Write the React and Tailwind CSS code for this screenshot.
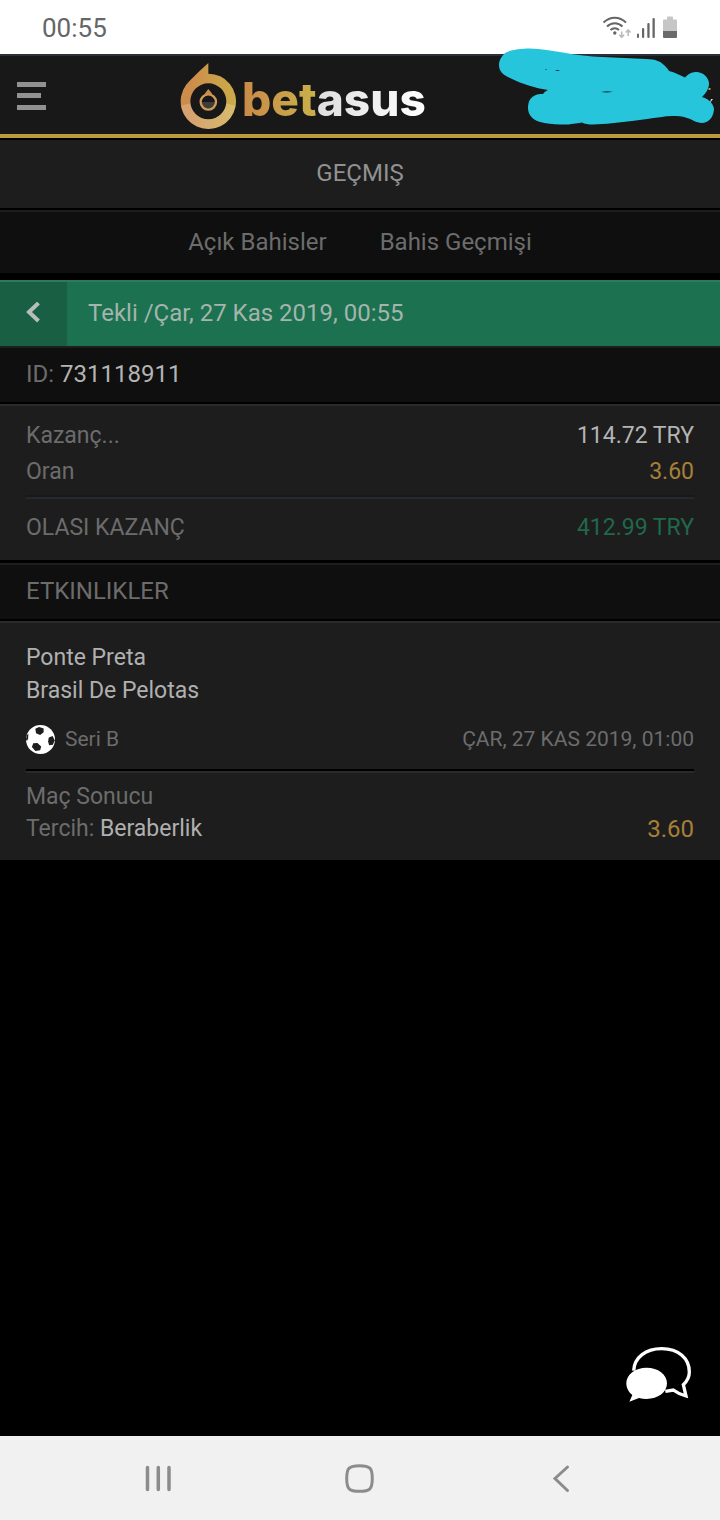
import React from "react";

const bet = {
  type: "Tekli",
  date: "Çar, 27 Kas 2019, 00:55",
  id: "731118911",
  stake: "114.72 TRY",
  odds: "3.60",
  payout: "412.99 TRY",
};

const events = [
  {
    home: "Ponte Preta",
    away: "Brasil De Pelotas",
    league: "Seri B",
    date: "ÇAR, 27 KAS 2019, 01:00",
    market: "Maç Sonucu",
    pick: "Beraberlik",
    odds: "3.60",
  },
];

const StatusBar = () => (
  <div className="flex h-[54px] items-center justify-between bg-white px-[42px] pt-0.5 text-[#666]">
    <span className="text-[26px] leading-8">00:55</span>
    <div className="flex items-center gap-1 pb-0.5">
      <svg width="30" height="24" viewBox="0 0 30 24" fill="none" stroke="#666" strokeWidth="2">
        <path d="M1.5 7.5C8 1 17.500 1 24 7.500" />
        <path d="M5 11.500C9.500 7 16 7 20.500 11.500" />
        <path d="M8.500 15C11 12.500 14.500 12.500 17 15" />
        <circle cx="12.800" cy="18" r="1.700" fill="#666" stroke="none" />
        <path d="M19.700 16.500V22M17.300 19.700L19.700 22.300L22.100 19.700" stroke="#bbb" strokeWidth="1.600" />
        <path d="M26.200 21V15M23.800 17.500L26.200 14.900L28.600 17.500" stroke="#bbb" strokeWidth="1.600" />
      </svg>
      <svg width="22" height="24" viewBox="0 0 22 24" fill="#666">
        <rect x="1" y="18.500" width="2" height="4.500" rx="1" />
        <rect x="6" y="13" width="2.200" height="10" rx="1" />
        <rect x="11.300" y="8" width="2.300" height="15" rx="1" />
        <rect x="16.500" y="3" width="2.300" height="20" rx="1" />
      </svg>
      <svg width="16" height="24" viewBox="0 0 16 24">
        <path d="M1 5.500a1 1 0 0 1 1-1h3V2.500a1 1 0 0 1 1-1h4a1 1 0 0 1 1 1v2h3a1 1 0 0 1 1 1V17H1z" fill="#c6c6c6" />
        <path d="M1 16h14v6a1 1 0 0 1-1 1H2a1 1 0 0 1-1-1z" fill="#6a6a6a" />
      </svg>
    </div>
  </div>
);

const Logo = () => (
  <a href="#" className="flex items-end gap-1.5">
    <svg width="56" height="66" viewBox="30 39 168 198" fill="none">
      <defs>
        <linearGradient id="ring" x1="0" y1="0" x2="1" y2="0">
          <stop offset="0.2" stopColor="#cc8d4c" />
          <stop offset="1" stopColor="#cbac48" />
        </linearGradient>
        <clipPath id="lower">
          <path d="M30 168L115 146L198 168V240H30z" />
        </clipPath>
      </defs>
      <path
        d="M115 39V71A83 83 0 1 1 48 105C64 86 94 58 115 39zM115 100A54 54 0 1 0 115 208A54 54 0 1 0 115 100z"
        fill="url(#ring)"
        fillRule="evenodd"
      />
      <circle cx="115" cy="154" r="68.500" stroke="#fff" strokeOpacity="0.2" strokeWidth="29" clipPath="url(#lower)" />
      <path d="M95 156H135A20 20 0 0 1 95 156z" fill="#3d3d3d" />
      <circle cx="115" cy="156" r="23" stroke="#cf9b58" strokeWidth="7" />
      <path d="M115 117L127 132L122 134H102z" fill="#cc8d4c" />
    </svg>
    <span className="font-['Inter'] text-[46px] font-extrabold leading-[60px]">
      <span className="bg-linear-to-r from-[#c98a48] to-[#c9b04a] bg-clip-text text-transparent">bet</span>
      <span className="bg-linear-to-r from-[#dedede] to-white bg-clip-text text-transparent">asus</span>
    </span>
  </a>
);

const Header = () => (
  <header className="relative flex h-[84px] items-center gap-[134px] border-t-2 border-b-4 border-t-[#2b2f3a] border-b-[#bd9a40] bg-[#181818] pt-0.5 pl-4">
    <button type="button" aria-label="Menü">
      <svg width="30" height="30" viewBox="0 0 30 30" fill="#919191">
        <path d="M1 1h29v5H1zM1 12h24v5H1zM1 24h29v5H1z" />
      </svg>
    </button>
    <Logo />
    {/* Marker strokes over the account area */}
    <svg className="absolute -top-2.5 right-0" width="224" height="100" viewBox="496 46 224 100" fill="#27c5dc">
      <path d="M499 65C499 60 502 56 505 53C510 50 520 48.500 530 48.500C541 48.500 552 51 563 52.500C576 55 590 56.500 603 57L646 59C656 59 661 62 664 65C666 67 668 69 669 71C675 72.500 680 75 685 77.500C689 73 693 72 697 72C704 73 708 77 709 83C709 89 706 93 702 97C710 99 714 105 714 110C713 118 708 123 702 123C696 123 692 119 687 118C682 116 677 116 673 116C664 116 656 118 647 119C630 121 612 124 593 124.500C588 124.500 585 124 582 122.500C576 123.500 568 125 560 124.500C553 124.500 546 123.500 540 122C532 120 528 114 528 108C528 102 530 98 534 96C537 94 540 94 543 94C544 92 546 91 548 90C535 88 522 84 510 78C503 75 499 71 499 65z" />
      <path d="M545 69h2v.6h-2zM555 70.400q2.500-1 5 0q-2.500 1-5 0zM601 92q5-1.200 12-.3q-6 1.400-12 .3z" fill="#0b343a" />
      <path d="M708.500 88h2v2h-2z" fill="#bd9a40" />
      <path d="M710 103l1-4h2z" fill="#ddd" />
      <path d="M626.500 140h1.500v2h-1.500z" fill="#999" />
    </svg>
  </header>
);

const BallIcon = () => (
  <svg width="29" height="29" viewBox="0 0 84 84">
    <circle cx="42" cy="42" r="42" fill="#fff" />
    <g fill="#1d1d1d">
      <path d="M27 11L38 6L51 10L51 21L41 29L29 24z" />
      <path d="M66 36L77 32L83 44L78 57L67 59L64 48z" />
      <path d="M21 53L33 52L44 62L41 73L27 75L17 64z" />
      <path d="M2 30L7 25L6 39L3 46L0 42z" />
    </g>
  </svg>
);

const SectionTitle = ({ children }) => (
  <div className="border-y-2 border-t-[#1e1e1e] border-b-black bg-[#0f0f0f] px-[26px] pt-[9px] pb-[11px] text-2xl leading-[34px]">
    {children}
  </div>
);

const Event = ({ event }) => (
  <div className="border-t-2 border-[#2a2a2a] bg-[#1d1d1d] px-[26px] pt-[18px] pb-[15px]">
    <div className="text-[23px] leading-[33px] text-[#b0b0b0]">
      <p>{event.home}</p>
      <p>{event.away}</p>
    </div>
    <div className="mt-4 flex items-center gap-2.5 border-b-2 border-black pb-3.5 text-[21px] leading-8">
      <BallIcon />
      <span>{event.league}</span>
      <span className="ml-auto">{event.date}</span>
    </div>
    <div className="flex items-end justify-between border-t-2 border-[#2a2a2a] pt-2 text-[23px] leading-8">
      <div>
        <p>{event.market}</p>
        <p>
          Tercih: <span className="text-[#b0b0b0]">{event.pick}</span>
        </p>
      </div>
      <span className="text-2xl leading-8 text-[#a87f38]">{event.odds}</span>
    </div>
  </div>
);

const NavBar = () => (
  <nav className="flex h-[84px] items-center justify-center gap-[168px] bg-[#f1f1f1]">
    <button type="button" aria-label="Son uygulamalar">
      <svg width="34" height="34" viewBox="0 0 34 34" stroke="#8c8c8c" strokeWidth="3.500" strokeLinecap="round">
        <path d="M6.500 6.500V28.500M17.300 6.500V28.500M28 6.500V28.500" />
      </svg>
    </button>
    <button type="button" aria-label="Ana ekran">
      <svg width="34" height="34" viewBox="0 0 34 34" fill="none" stroke="#8c8c8c" strokeWidth="3">
        <path d="M16.500 4.700C27 4.700 29.300 7 29.300 17.500S27 30.300 16.500 30.300S3.700 28 3.700 17.500S6 4.700 16.500 4.700z" />
      </svg>
    </button>
    <button type="button" aria-label="Geri">
      <svg width="34" height="34" viewBox="0 0 34 34" fill="none" stroke="#8c8c8c" strokeWidth="3" strokeLinecap="round">
        <path d="M22.500 6L10 17.500L22.500 29.500" />
      </svg>
    </button>
  </nav>
);

const App = () => {
  return (
    <div className="flex min-h-screen flex-col bg-black font-['Roboto',sans-serif] text-[#6c6c6c]">
      <StatusBar />
      <Header />

      <main className="relative flex-1">
        <h1 className="mt-0.5 bg-[#1d1d1d] pt-[15px] pb-[17px] text-center text-2xl leading-9 text-[#919191]">GEÇMIŞ</h1>

        <div className="mt-0.5 flex justify-center gap-[53px] border-t-2 border-[#1e1e1e] bg-[#0f0f0f] pt-3 pb-[13px] text-2xl leading-9">
          <button type="button">Açık Bahisler</button>
          <button type="button">Bahis Geçmişi</button>
        </div>

        <div className="mt-[7px] flex h-[66px] border-t-2 border-[#2f7a5c] bg-[#1c7150] text-2xl text-[#a3b5ac]">
          <button type="button" aria-label="Geri dön" className="flex w-[67px] items-center justify-center bg-[#185f43]">
            <svg width="20" height="24" viewBox="0 0 20 24" fill="none" stroke="#b4bfba" strokeWidth="4">
              <path d="M14.500 1L5 10L14.500 19" />
            </svg>
          </button>
          <span className="pl-[21px] leading-[62px]">
            {bet.type} /{bet.date}
          </span>
        </div>

        <SectionTitle>
          ID: <span className="text-[#b4b4b4]">{bet.id}</span>
        </SectionTitle>

        <dl className="border-t-2 border-[#2a2a2a] bg-[#1d1d1d] px-[26px] pt-3 pb-3.5 text-[23px] leading-9">
          <div className="flex justify-between">
            <dt>Kazanç...</dt>
            <dd className="text-[#b4b4b4]">{bet.stake}</dd>
          </div>
          <div className="flex justify-between border-b-2 border-[#14181f] pb-[5px]">
            <dt>Oran</dt>
            <dd className="text-[#a87f38]">{bet.odds}</dd>
          </div>
          <div className="flex justify-between border-t-2 border-[#27282e] pt-[11px]">
            <dt>OLASI KAZANÇ</dt>
            <dd className="text-[#20684b]">{bet.payout}</dd>
          </div>
        </dl>

        <div className="mt-[3px]">
          <SectionTitle>ETKINLIKLER</SectionTitle>
        </div>
        {events.map((event) => (
          <Event key={event.home} event={event} />
        ))}

        <button type="button" aria-label="Canlı destek" className="absolute right-7 bottom-8">
          <svg width="66" height="58" viewBox="78 48 198 174">
            <path
              d="M101 122C103 82 138 56 185 56C236 56 268 86 268 126C268 141 262 153 250 164L258 198C245 195 232 189 220 180L196 184"
              fill="none"
              stroke="#fff"
              strokeWidth="10"
            />
            <path d="M140 113C174 113 201 133 201 160C201 187 174 207 140 207C132 207 124 206 117 204L88 215L97 195C86 187 79 174 79 160C79 133 106 113 140 113z" fill="#fff" />
          </svg>
        </button>
      </main>

      <NavBar />
    </div>
  );
};

export default App;
